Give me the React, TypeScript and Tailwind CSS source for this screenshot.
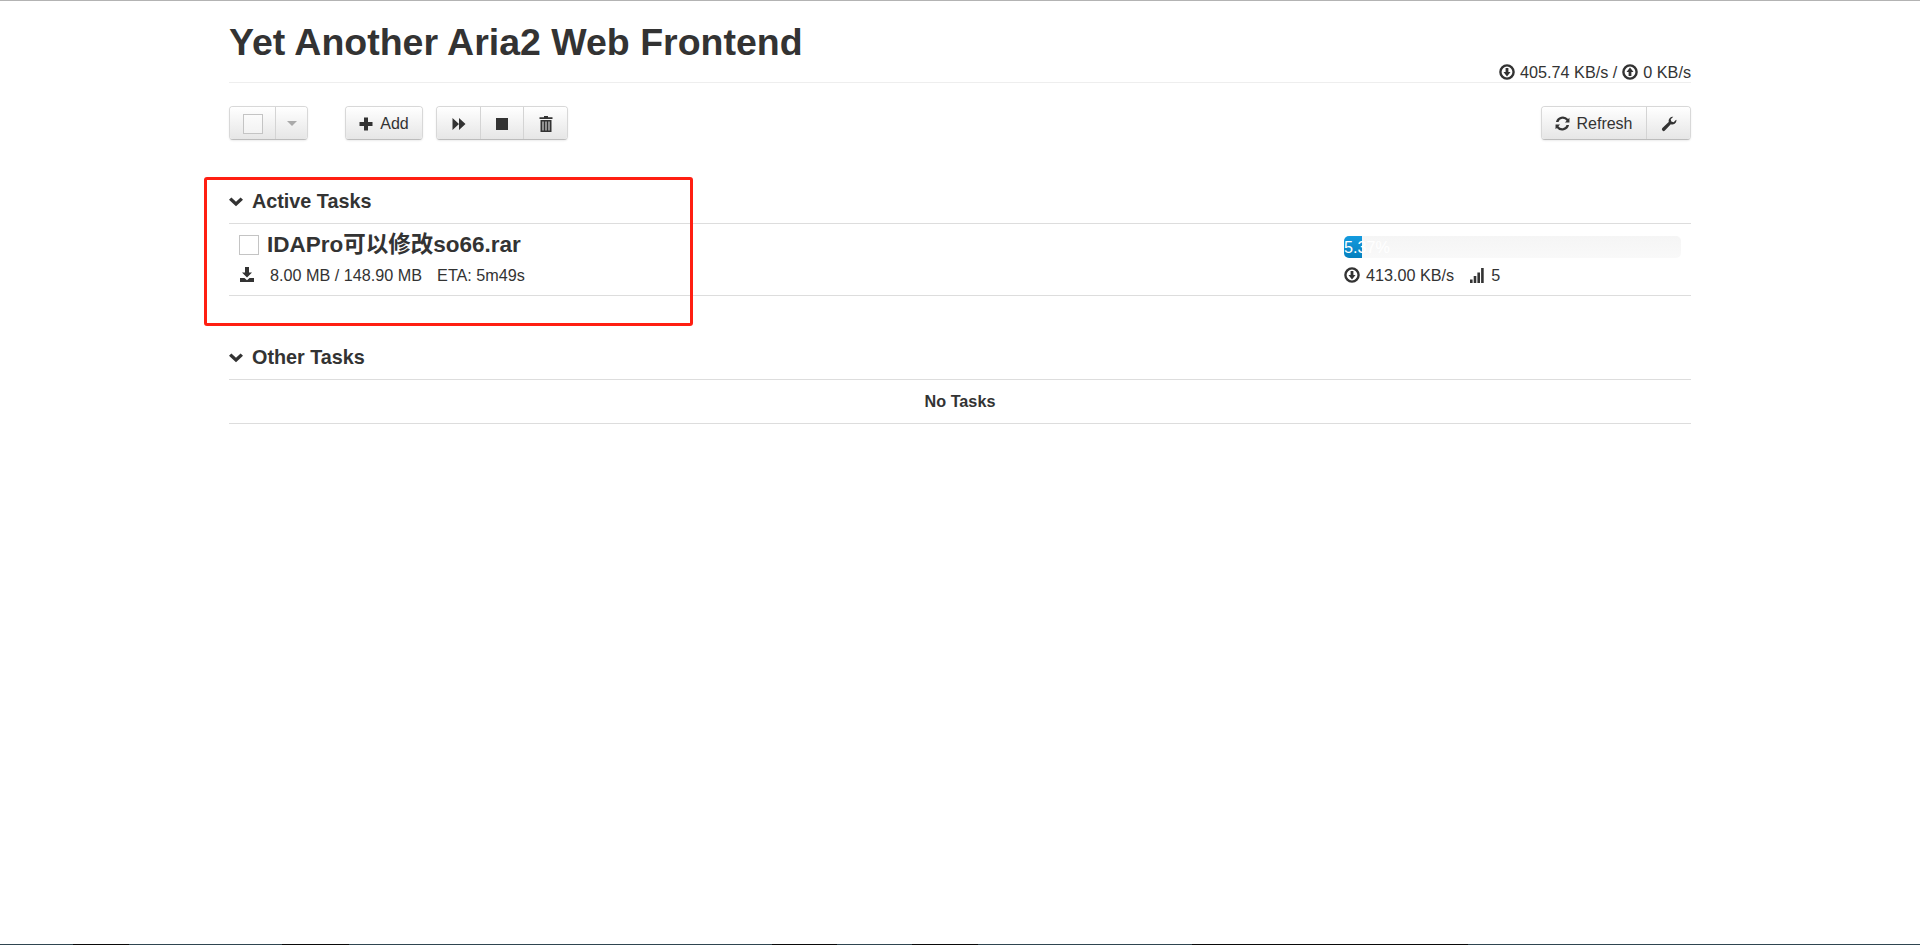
import type { ReactNode } from "react";

const FONT = "font-['Liberation_Sans','Noto_Sans_CJK_SC',sans-serif]";

function CircleArrow({ up = false }: { up?: boolean }) {
  return (
    <svg width="16" height="16" viewBox="0 0 16 16" className="inline-block shrink-0">
      <circle cx="8" cy="8" r="6.600" fill="none" stroke="#333" strokeWidth="2.400" />
      <path
        d={up ? "M8 3.600 11.500 8H9.400v4H6.600V8H4.500z" : "M8 12.400 11.500 8H9.400V4H6.600v4H4.500z"}
        fill="#333"
      />
    </svg>
  );
}

function Chevron() {
  return (
    <svg width="14" height="14" viewBox="0 0 14 14" className="shrink-0">
      <path d="M0 4.800 2.400 2.400 7 6.800l4.600-4.400L14 4.800 7 11.200z" fill="#333" />
    </svg>
  );
}

function Checkbox() {
  return <span className="block size-5 border border-[#c4c4c4] bg-white/40" />;
}

function BarIcon() {
  return (
    <svg width="14" height="15" viewBox="0 0 14 15" className="block shrink-0">
      <path d="M0 11.500h2.600V15H0zM3.700 8h2.600v7H3.700zM7.400 4.500h2.600V15H7.400zM11.100 0h2.600v15h-2.600z" fill="#333" />
    </svg>
  );
}

function Btn({ children, className = "" }: { children: ReactNode; className?: string }) {
  return (
    <button
      className={`flex h-[32px] items-center justify-center border-r border-[#d4d4d4] bg-gradient-to-b from-white to-[#e6e6e6] pt-px text-base text-[#333] last:border-r-0 ${className}`}
    >
      {children}
    </button>
  );
}

function BtnGroup({ children }: { children: ReactNode }) {
  return (
    <div className="flex overflow-hidden rounded-[4px] border border-[#d8d8d8] border-b-[#bcbcbc] shadow-[0_1px_2px_rgba(0,0,0,0.08)]">
      {children}
    </div>
  );
}

function SectionTitle({ title }: { title: string }) {
  return (
    <div className="flex h-[45px] items-center gap-[9px] border-b border-[#ddd] pt-[2px]">
      <Chevron />
      <span className="text-[19.8px] font-bold text-[#333]">{title}</span>
    </div>
  );
}

export default function App() {
  return (
    <div className={`relative h-[945px] overflow-hidden border-t border-[#b3b3b3] bg-white ${FONT}`}>
      <div className="mx-auto w-[1462px]">
        <header className="flex h-[82px] items-end justify-between border-b border-[#eee]">
          <h1 className="mb-[20px] text-[37.5px] leading-10 font-bold text-[#333]">
            Yet Another Aria2 Web Frontend
          </h1>
          <div className="flex items-center gap-[5px] text-[16.2px] leading-5 text-[#333]">
            <CircleArrow />
            <span>405.74 KB/s /</span>
            <CircleArrow up />
            <span>0 KB/s</span>
          </div>
        </header>

        <div className="mt-[23px] flex items-center">
          <BtnGroup>
            <Btn className="w-[46px]">
              <Checkbox />
            </Btn>
            <Btn className="w-[31px]">
              <span className="border-x-[5px] border-t-[5px] border-x-transparent border-t-[#aaa]" />
            </Btn>
          </BtnGroup>
          <div className="ml-[37px]">
            <BtnGroup>
              <Btn className="w-[76px] gap-[7px]">
                <svg width="14" height="14" viewBox="0 0 14 14">
                  <path d="M5 0.500h4V5h4.500v4H9v4.500H5V9H0.500V5H5z" fill="#333" />
                </svg>
                Add
              </Btn>
            </BtnGroup>
          </div>
          <div className="ml-[13px]">
            <BtnGroup>
              <Btn className="w-[44px]">
                <svg width="14" height="14" viewBox="0 0 14 14">
                  <path d="M0.500 1 7 7 0.500 13zM7 1l6.500 6L7 13z" fill="#333" />
                </svg>
              </Btn>
              <Btn className="w-[43px]">
                <span className="block size-3 bg-[#333]" />
              </Btn>
              <Btn className="w-[43px]">
                <svg width="14" height="16" viewBox="0 0 14 16">
                  <path
                    d="M5 0h4v1.200h4.500V3H.5V1.200H5zM1.500 4h11v12h-11zM3.500 5.500v9h1v-9zM6.500 5.500v9h1v-9zM9.500 5.500v9h1v-9z"
                    fill="#333"
                    fillRule="evenodd"
                  />
                </svg>
              </Btn>
            </BtnGroup>
          </div>
          <div className="ml-auto">
            <BtnGroup>
              <Btn className="w-[105px] gap-[6px]">
                <svg width="15" height="15" viewBox="0 0 14 14">
                  <path
                    d="M13.500 6H9.300l1.500-1.500A4.200 4.200 0 0 0 3.200 5.600H.9A6.500 6.500 0 0 1 12.300 2.900L13.500 1.700zM.5 8h4.200L3.200 9.500a4.200 4.200 0 0 0 7.600-1.100h2.300A6.500 6.500 0 0 1 1.700 11.100L.5 12.300z"
                    fill="#333"
                  />
                </svg>
                Refresh
              </Btn>
              <Btn className="w-[43px]">
                <svg width="16" height="16" viewBox="0 0 16 16">
                  <path
                    d="M15.500 4.200a4.300 4.300 0 0 1-5.700 4L3.900 14.500a1.700 1.700 0 0 1-2.500-2.400l6.300-6A4.300 4.300 0 0 1 12.300.8L9.700 3.300l.6 2.300 2.300.6 2.500-2.500z"
                    fill="#333"
                  />
                </svg>
              </Btn>
            </BtnGroup>
          </div>
        </div>

        <section className="mt-[39px]">
          <SectionTitle title="Active Tasks" />
          <div className="flex h-[72px] border-b border-[#ddd]">
            <div className="flex-1 pt-[9px]">
              <div className="flex h-[24px] items-center gap-[8px] pl-[10px]">
                <Checkbox />
                <span className="text-[22.5px] font-bold text-[#333]">IDAPro可以修改so66.rar</span>
              </div>
              <div className="mt-[8px] flex h-5 items-center pl-[11px] text-[16.2px] text-[#333]">
                <svg width="14" height="15" viewBox="0 0 14 15" className="-mt-[2px] shrink-0">
                  <path d="M5 0h4v5.500h3L7 10.500 2 5.500h3zM0 11h4.500L7 13.200 9.500 11H14v4H0z" fill="#333" />
                </svg>
                <span className="ml-[16px]">8.00 MB / 148.90 MB</span>
                <span className="ml-[15px]">ETA: 5m49s</span>
              </div>
            </div>
            <div className="w-[347px] pt-[12px]">
              <div className="relative h-[22px] w-[337px] overflow-hidden rounded-[5px] bg-gradient-to-b from-[#f5f5f5] to-[#f9f9f9] text-[16.2px] leading-[22px] text-white">
                <div className="h-full w-[18px] bg-gradient-to-b from-[#149bdf] to-[#0480be]" />
                <span className="absolute top-0 left-0">5.37%</span>
              </div>
              <div className="mt-[7px] flex h-5 items-center text-[16.2px] text-[#333]">
                <CircleArrow />
                <span className="ml-[6px]">413.00 KB/s</span>
                <span className="ml-[16px]">
                  <BarIcon />
                </span>
                <span className="ml-[7px]">5</span>
              </div>
            </div>
          </div>
        </section>

        <section className="mt-[39px]">
          <SectionTitle title="Other Tasks" />
          <div className="flex h-[44px] items-center justify-center border-b border-[#ddd] text-[16.2px] font-bold text-[#333]">
            No Tasks
          </div>
        </section>
      </div>

      <div className="absolute top-[176px] left-[204px] h-[149px] w-[489px] rounded-[3px] border-[3px] border-[#ff1f12]" />

      {/* sliver of the desktop taskbar along the bottom edge */}
      <div className="absolute inset-x-0 bottom-0 flex h-px bg-[#2f4550]">
        <div className="ml-[73px] w-[56px] bg-[#0a0a0a]" />
        <div className="ml-[153px] w-[67px] bg-[#0a0a0a]" />
        <div className="ml-[423px] w-[65px] bg-[#0a0a0a]" />
        <div className="ml-[75px] w-[66px] bg-[#0a0a0a]" />
        <div className="ml-[214px] w-[276px] bg-[#0a0a0a]" />
      </div>
    </div>
  );
}
